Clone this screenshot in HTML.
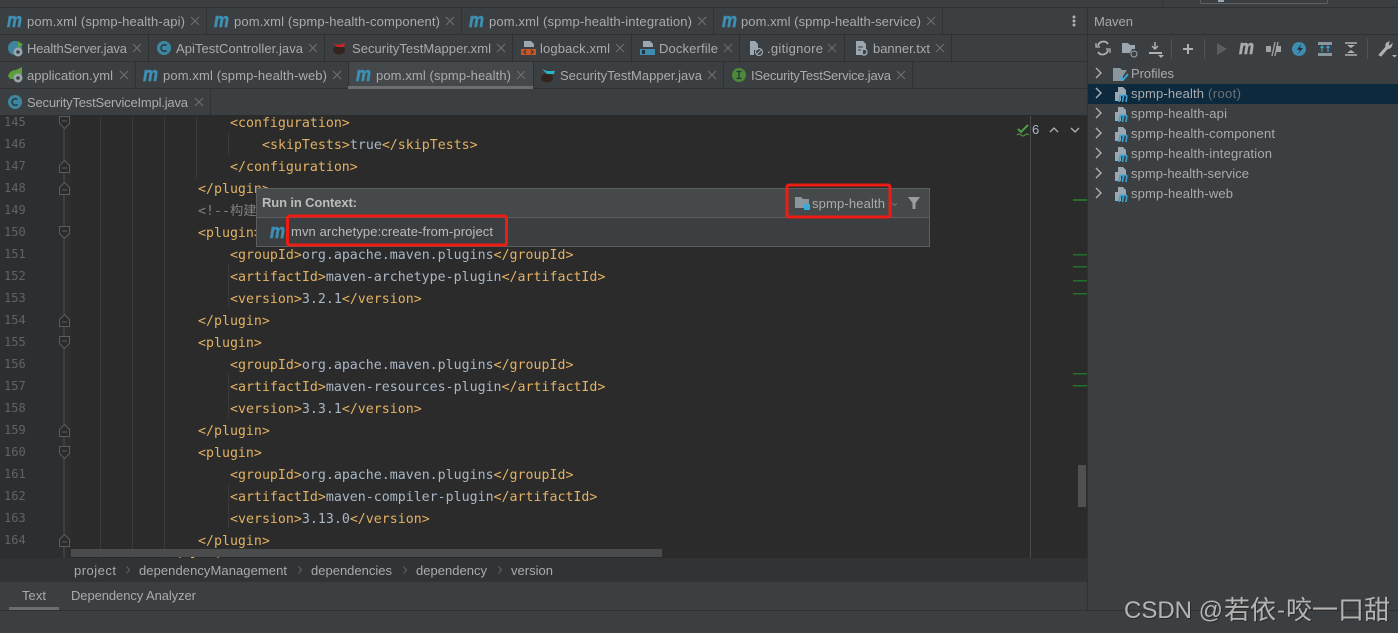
<!DOCTYPE html>
<html><head><meta charset="utf-8"><style>
html,body{margin:0;padding:0;background:#3c3f41;overflow:hidden}
svg{display:block}
.u{font-family:"Liberation Sans","Noto Sans CJK SC",sans-serif;font-size:13px;fill:#a9abad}
.c{font-family:"DejaVu Sans Mono","Noto Sans CJK SC",monospace;font-size:13.28px;fill:#e2b262}
.c tspan{fill:#a9b7c6}
.n{font-family:"DejaVu Sans Mono",monospace;font-size:12px;fill:#606366}
.m{font-family:"Liberation Sans",sans-serif;font-weight:bold;font-style:italic;font-size:20px;fill:#3d8fb3;stroke:#3d8fb3;stroke-width:.6px}
.m2{font-family:"Liberation Sans",sans-serif;font-weight:bold;font-style:italic;font-size:14px;fill:#3aa5d6}
</style></head><body>
<svg xmlns="http://www.w3.org/2000/svg" width="1398" height="633" viewBox="0 0 1398 633">
<defs>
<path id="x" d="M-4-4 4 4M4-4-4 4" stroke="#6f7274" stroke-width="1" fill="none"/>
<path id="mod" d="M3 0h5l3 3v5H6v6H0V5h3z" fill="#9aa7b0"/>
<path id="chev" d="M-3-5 2 0-3 5" stroke="#aeb0b2" stroke-width="1.400" fill="none"/>
<path id="fold1" d="M-5-6H5V1L0 6-5 1zM-2.500-1.500H2.500" stroke="#5a5d5f" fill="#2b2b2b"/>
<path id="fold2" d="M-5 6H5V-1L0-6-5-1zM-2.500 1.500H2.500" stroke="#5a5d5f" fill="#2b2b2b"/>
<path id="brc" d="M-1.500-3.500 1.500 0-1.500 3.500" stroke="#5f6264" fill="none"/>
<clipPath id="edclip"><rect x="0" y="115" width="1087" height="443"/></clipPath>
</defs>

<rect width="1398" height="633" fill="#3c3f41"/>
<!-- top hint -->
<path d="M1163 0V7" stroke="#323232"/>
<path d="M1200.500 0V2.500q0 1 1 1H1326.500q1 0 1-1V0" stroke="#5f6264" fill="none"/>
<rect x="1218" y="0" width="6" height="2" fill="#9aa7b0"/>

<!-- separators -->
<g fill="#2f3133">
<rect x="0" y="7" width="1398" height="1"/>
<rect x="0" y="34" width="1398" height="1"/>
<rect x="0" y="61" width="1087" height="1"/>
<rect x="0" y="88" width="1087" height="1"/>
<rect x="1087" y="7" width="1" height="604"/>
<rect x="206" y="8" width="1" height="26"/><rect x="461" y="8" width="1" height="26"/><rect x="713" y="8" width="1" height="26"/><rect x="942" y="8" width="1" height="26"/>
<rect x="148" y="35" width="1" height="26"/><rect x="324" y="35" width="1" height="26"/><rect x="512" y="35" width="1" height="26"/><rect x="631" y="35" width="1" height="26"/><rect x="739" y="35" width="1" height="26"/><rect x="844" y="35" width="1" height="26"/><rect x="951" y="35" width="1" height="26"/>
<rect x="135" y="62" width="1" height="26"/><rect x="348" y="62" width="1" height="26"/><rect x="533" y="62" width="1" height="26"/><rect x="723" y="62" width="1" height="26"/><rect x="912" y="62" width="1" height="26"/>
<rect x="210" y="89" width="1" height="26"/>
</g>
<!-- active tab -->
<rect x="349" y="62" width="184" height="26" fill="#45484a"/>
<rect x="348" y="86" width="185" height="3" fill="#6c6f72"/>

<!-- row 1 -->
<text class="m" x="7" y="27" textLength="15" lengthAdjust="spacingAndGlyphs">m</text>
<text class="u" x="27" y="26" textLength="158">pom.xml (spmp-health-api)</text><use href="#x" x="195" y="21"/>
<text class="m" x="214" y="27" textLength="15" lengthAdjust="spacingAndGlyphs">m</text>
<text class="u" x="234" y="26" textLength="206">pom.xml (spmp-health-component)</text><use href="#x" x="450" y="21"/>
<text class="m" x="469" y="27" textLength="15" lengthAdjust="spacingAndGlyphs">m</text>
<text class="u" x="489" y="26" textLength="203">pom.xml (spmp-health-integration)</text><use href="#x" x="702" y="21"/>
<text class="m" x="722" y="27" textLength="15" lengthAdjust="spacingAndGlyphs">m</text>
<text class="u" x="741" y="26" textLength="180">pom.xml (spmp-health-service)</text><use href="#x" x="931" y="21"/>
<g fill="#afb1b3"><circle cx="1074" cy="17" r="1.500"/><circle cx="1074" cy="21" r="1.500"/><circle cx="1074" cy="25" r="1.500"/></g>

<!-- row 2 -->
<circle cx="15" cy="48" r="7" fill="#3e86a0"/><path d="M18 41l5 3.500-5 3.500z" fill="#5e9e3d"/><circle cx="18" cy="52" r="4.500" fill="#9aa7b0"/><circle cx="18" cy="52" r="1.800" fill="#3c3f41"/>
<text class="u" x="27" y="53" textLength="100">HealthServer.java</text><use href="#x" x="137" y="48"/>
<circle cx="164" cy="48" r="7" fill="#3e86a0"/><path d="M166.500 45.500a3.300 3.300 0 1 0 0 5" stroke="#25323a" stroke-width="1.400" fill="none"/>
<text class="u" x="176" y="53" textLength="127">ApiTestController.java</text><use href="#x" x="313" y="48"/>
<ellipse cx="339" cy="50" rx="6" ry="4.500" fill="#33241f"/><path d="M333 43l5 2 7-2-1 4-7 0z" fill="#c8242a"/>
<text class="u" x="352" y="53" textLength="139">SecurityTestMapper.xml</text><use href="#x" x="501" y="48"/>
<path d="M524 41h7l3 3v3h-10z" fill="#9aa7b0"/><rect x="521" y="49" width="15" height="6" fill="#c4572a"/><path d="M526 50l-2 2 2 2M531 50l2 2-2 2" stroke="#2b2b2b" fill="none"/>
<text class="u" x="540" y="53" textLength="70">logback.xml</text><use href="#x" x="620" y="48"/>
<path d="M643 41h7l3 3v3h-10z" fill="#9aa7b0"/><rect x="640" y="49" width="15" height="6" fill="#3e8db0"/><rect x="642" y="50" width="3" height="4" fill="#25323a"/>
<text class="u" x="659" y="53" textLength="59">Dockerfile</text><use href="#x" x="728" y="48"/>
<path d="M750 41h5l3 3v6h-4v5h-4z" fill="#9aa7b0"/><circle cx="759" cy="52" r="3.500" stroke="#9aa7b0" stroke-width="1.200" fill="none"/><path d="M757 54l4-4" stroke="#9aa7b0"/>
<text class="u" x="767" y="53" textLength="56">.gitignore</text><use href="#x" x="832" y="48"/>
<path d="M856 41h7l3 3v6h-3v5h-7z" fill="#9aa7b0"/><path d="M858 47h5M858 50h4" stroke="#3c3f41"/><circle cx="864" cy="52" r="3" stroke="#9aa7b0" stroke-width="1.400" fill="none"/>
<text class="u" x="873" y="53" textLength="57">banner.txt</text><use href="#x" x="940" y="48"/>

<!-- row 3 -->
<path d="M8 76q2-6 8-6l6-3v7q-1 5-6 5H10z" fill="#5e9e3d"/><circle cx="18" cy="78" r="4.500" fill="#9aa7b0"/><circle cx="18" cy="78" r="1.800" fill="#3c3f41"/>
<text class="u" x="27" y="80" textLength="86">application.yml</text><use href="#x" x="124" y="75"/>
<text class="m" x="143" y="81" textLength="15" lengthAdjust="spacingAndGlyphs">m</text>
<text class="u" x="163" y="80" textLength="164">pom.xml (spmp-health-web)</text><use href="#x" x="337" y="75"/>
<text class="m" x="356" y="81" textLength="15" lengthAdjust="spacingAndGlyphs">m</text>
<text class="u" x="376" y="80" textLength="135">pom.xml (spmp-health)</text><use href="#x" x="521" y="75"/>
<ellipse cx="547" cy="78" rx="6" ry="4.500" fill="#33241f"/><path d="M542 69l5 2 8 0-1 3-7 0z" fill="#29b5c9"/>
<text class="u" x="560" y="80" textLength="142">SecurityTestMapper.java</text><use href="#x" x="712" y="75"/>
<circle cx="739" cy="75" r="7" fill="#4c8a3a"/><path d="M736.500 71.500h5M736.500 78.500h5M739 71.500v7" stroke="#25323a" stroke-width="1.200"/>
<text class="u" x="751" y="80" textLength="140">ISecurityTestService.java</text><use href="#x" x="901" y="75"/>

<!-- row 4 -->
<circle cx="15" cy="102" r="7" fill="#3e86a0"/><path d="M17.500 99.500a3.300 3.300 0 1 0 0 5" stroke="#25323a" stroke-width="1.400" fill="none"/>
<text class="u" x="27" y="107" textLength="161">SecurityTestServiceImpl.java</text><use href="#x" x="199" y="102"/>

<!-- editor -->
<rect x="0" y="115" width="1087" height="443" fill="#2b2b2b"/>
<rect x="0" y="115" width="71" height="443" fill="#2d2e2f"/>
<g fill="#393a3b">
<rect x="100" y="116" width="1" height="442"/><rect x="132" y="116" width="1" height="442"/><rect x="164" y="116" width="1" height="442"/>
<rect x="196" y="116" width="1" height="62"/><rect x="228" y="132" width="1" height="24"/>
<rect x="228" y="264" width="1" height="44"/><rect x="228" y="374" width="1" height="44"/><rect x="228" y="484" width="1" height="44"/>
</g>
<rect x="1030" y="116" width="1" height="442" fill="#4a4b4c"/>
<path d="M64 128V558" stroke="#4c4f51"/>

<text class="n" x="4" y="126">145</text><text class="n" x="4" y="148">146</text><text class="n" x="4" y="170">147</text><text class="n" x="4" y="192">148</text><text class="n" x="4" y="214">149</text><text class="n" x="4" y="236">150</text><text class="n" x="4" y="258">151</text><text class="n" x="4" y="280">152</text><text class="n" x="4" y="302">153</text><text class="n" x="4" y="324">154</text><text class="n" x="4" y="346">155</text><text class="n" x="4" y="368">156</text><text class="n" x="4" y="390">157</text><text class="n" x="4" y="412">158</text><text class="n" x="4" y="434">159</text><text class="n" x="4" y="456">160</text><text class="n" x="4" y="478">161</text><text class="n" x="4" y="500">162</text><text class="n" x="4" y="522">163</text><text class="n" x="4" y="544">164</text>
<use href="#fold1" x="64.500" y="122.500"/><use href="#fold2" x="64.500" y="166.500"/><use href="#fold2" x="64.500" y="188.500"/><use href="#fold1" x="64.500" y="232.500"/><use href="#fold2" x="64.500" y="320.500"/><use href="#fold1" x="64.500" y="342.500"/><use href="#fold2" x="64.500" y="430.500"/><use href="#fold1" x="64.500" y="452.500"/><use href="#fold2" x="64.500" y="540.500"/>

<text class="c" x="230" y="127">&lt;configuration&gt;</text>
<text class="c" x="262" y="149">&lt;skipTests&gt;<tspan>true</tspan>&lt;/skipTests&gt;</text>
<text class="c" x="230" y="171">&lt;/configuration&gt;</text>
<text class="c" x="198" y="193">&lt;/plugin&gt;</text>
<text class="c" x="198" y="215" style="fill:#808080">&lt;!--构建</text>
<text class="c" x="198" y="237">&lt;plugin&gt;</text>
<text class="c" x="230" y="259">&lt;groupId&gt;<tspan>org.apache.maven.plugins</tspan>&lt;/groupId&gt;</text>
<text class="c" x="230" y="281">&lt;artifactId&gt;<tspan>maven-archetype-plugin</tspan>&lt;/artifactId&gt;</text>
<text class="c" x="230" y="303">&lt;version&gt;<tspan>3.2.1</tspan>&lt;/version&gt;</text>
<text class="c" x="198" y="325">&lt;/plugin&gt;</text>
<text class="c" x="198" y="347">&lt;plugin&gt;</text>
<text class="c" x="230" y="369">&lt;groupId&gt;<tspan>org.apache.maven.plugins</tspan>&lt;/groupId&gt;</text>
<text class="c" x="230" y="391">&lt;artifactId&gt;<tspan>maven-resources-plugin</tspan>&lt;/artifactId&gt;</text>
<text class="c" x="230" y="413">&lt;version&gt;<tspan>3.3.1</tspan>&lt;/version&gt;</text>
<text class="c" x="198" y="435">&lt;/plugin&gt;</text>
<text class="c" x="198" y="457">&lt;plugin&gt;</text>
<text class="c" x="230" y="479">&lt;groupId&gt;<tspan>org.apache.maven.plugins</tspan>&lt;/groupId&gt;</text>
<text class="c" x="230" y="501">&lt;artifactId&gt;<tspan>maven-compiler-plugin</tspan>&lt;/artifactId&gt;</text>
<text class="c" x="230" y="523">&lt;version&gt;<tspan>3.13.0</tspan>&lt;/version&gt;</text>
<text class="c" x="198" y="545">&lt;/plugin&gt;</text>
<text class="c" x="166" y="567" clip-path="url(#edclip)">&lt;/plugins&gt;</text>

<!-- inspection -->
<path d="M1018 129l3 3 7-7" stroke="#4f9e4a" stroke-width="2" fill="none"/><path d="M1017 135q2-2 4 0t4 0 4 0" stroke="#4f9e4a" fill="none"/>
<text class="u" x="1032" y="134" style="fill:#a9b7c6">6</text>
<path d="M1050 132l4-4 4 4M1071 128l4 4 4-4" stroke="#aeb0b2" stroke-width="1.300" fill="none"/>
<!-- change markers -->
<g fill="#23702a"><rect x="1073" y="199" width="14" height="2"/><rect x="1073" y="254" width="14" height="1.500"/><rect x="1073" y="266" width="14" height="1.500"/><rect x="1073" y="280" width="14" height="1.500"/><rect x="1073" y="293" width="14" height="1.500"/><rect x="1073" y="373" width="14" height="1.500"/><rect x="1073" y="385" width="14" height="1.500"/></g>
<!-- scrollbars -->
<rect x="1078" y="465" width="8" height="42" fill="#4f5052"/>
<rect x="71" y="549" width="591" height="8" fill="#4a4b4c"/>

<!-- breadcrumb -->
<rect x="0" y="558" width="1087" height="24" fill="#313335"/>
<rect x="0" y="558" width="1087" height="1" fill="#323232"/>
<text class="u" x="74" y="575" textLength="42">project</text><use href="#brc" x="128" y="570"/>
<text class="u" x="139" y="575" textLength="148">dependencyManagement</text><use href="#brc" x="300" y="570"/>
<text class="u" x="311" y="575" textLength="81">dependencies</text><use href="#brc" x="405" y="570"/>
<text class="u" x="416" y="575" textLength="71">dependency</text><use href="#brc" x="500" y="570"/>
<text class="u" x="511" y="575" textLength="42">version</text>
<!-- bottom tabs -->
<rect x="0" y="582" width="1087" height="28" fill="#3c3f41"/>
<text class="u" x="22" y="600" textLength="24">Text</text>
<text class="u" x="71" y="600" textLength="125">Dependency Analyzer</text>
<rect x="9" y="607" width="50" height="3" fill="#6c6f72"/>
<rect x="0" y="610" width="1398" height="1" fill="#2f3133"/>

<!-- popup -->
<rect x="256.500" y="188.500" width="673" height="58" fill="#3c3f41" stroke="#5d5e5f"/>
<rect x="257" y="189" width="672" height="28" fill="#46494a"/>
<rect x="257" y="217" width="672" height="1" fill="#5d5e5f"/>
<text class="u" x="262" y="207" textLength="95" style="font-weight:bold;fill:#bbbbbb">Run in Context:</text>
<text class="m" x="270" y="238" textLength="15" lengthAdjust="spacingAndGlyphs">m</text>
<text class="u" x="291" y="236" textLength="202" style="fill:#bbbbbb">mvn archetype:create-from-project</text>
<path d="M795 197h6l2 2h6v9h-14z" fill="#8a969e"/><rect x="804" y="204" width="6" height="6" fill="#38a9dc"/>
<text class="u" x="812" y="208" textLength="73">spmp-health</text>
<path d="M892 203l2.500 2.500 2.500-2.500" stroke="#6f7274" fill="none"/>
<path d="M908 197h12l-4.500 6v6h-3v-6z" fill="#9a9c9e"/>
<rect x="287.500" y="216" width="219" height="29" rx="2" fill="none" stroke="#ee1c12" stroke-width="3"/>
<rect x="787" y="185" width="103" height="32" rx="2" fill="none" stroke="#ee1c12" stroke-width="3"/>

<!-- maven panel -->
<text class="u" x="1094" y="26" textLength="39" style="fill:#a7a9ab">Maven</text>
<!-- toolbar -->
<path d="M1108 44a5.500 5.500 0 0 0-10 2M1098 52a5.500 5.500 0 0 0 10-2" stroke="#afb1b3" stroke-width="1.800" fill="none"/><path d="M1096 43v4h4M1110 53v-4h-4" stroke="#afb1b3" stroke-width="1.300" fill="none"/>
<path d="M1122 43h6l2 2h5v4h-3l-2 4h-8z" fill="#9aa7b0"/><circle cx="1134" cy="54" r="3" stroke="#9aa7b0" fill="none"/>
<path d="M1155 42v7M1152 46l3 3 3-3" stroke="#afb1b3" stroke-width="1.500" fill="none"/><rect x="1149" y="52" width="13" height="2" fill="#afb1b3"/><path d="M1158 55h6l-3 3z" fill="#afb1b3"/>
<rect x="1171" y="39" width="1" height="20" fill="#515456"/>
<path d="M1183 49h10M1188 44v10" stroke="#afb1b3" stroke-width="2" fill="none"/>
<rect x="1204" y="39" width="1" height="20" fill="#515456"/>
<path d="M1217 43l10 6-10 6z" fill="#5c5f61"/>
<text class="m" x="1239" y="54" textLength="15" lengthAdjust="spacingAndGlyphs" style="fill:#a9abad;stroke:#a9abad">m</text>
<path d="M1266 46h5v6h-5zM1276 46h5v6h-5z" fill="#a0a2a4"/><path d="M1272 56l3-14M1275 56l3-14" stroke="#a0a2a4" stroke-width="1.300" fill="none"/>
<circle cx="1299" cy="49" r="7" fill="#3e8db0"/><path d="M1301 44l-4 6h3l-2 4 5-6h-3z" fill="#25323a"/>
<rect x="1318" y="42" width="14" height="3" fill="#8a969e"/><rect x="1318" y="53" width="14" height="3" fill="#8a969e"/><path d="M1322 52v-6M1328 52v-6M1320.500 48l1.500-2 1.500 2M1326.500 48l1.500-2 1.500 2" stroke="#38a9dc" fill="none"/>
<path d="M1345 43h12M1345 55h12" stroke="#afb1b3" stroke-width="1.500"/><path d="M1347 45l4 3 4-3zM1347 53l4-3 4 3z" fill="#afb1b3"/>
<rect x="1367" y="39" width="1" height="20" fill="#515456"/>
<path d="M1379 55l7-8q-1-4 3-5l-1 3 2 1 2-2q0 4-5 5l-6 7z" fill="#afb1b3" stroke="#afb1b3"/><path d="M1392 55h5l-2.500 2.500z" fill="#afb1b3"/>

<!-- tree -->
<rect x="1088" y="84" width="310" height="20" fill="#0d293e"/>
<use href="#chev" x="1099" y="73"/><use href="#chev" x="1099" y="93"/><use href="#chev" x="1099" y="113"/><use href="#chev" x="1099" y="133"/><use href="#chev" x="1099" y="153"/><use href="#chev" x="1099" y="173"/><use href="#chev" x="1099" y="193"/>
<path d="M1113 68h7l2 2h5l-4 6v5h-10z" fill="#8a969e"/><path d="M1120 77l3 3 5-6" stroke="#38a9dc" stroke-width="1.800" fill="none"/>
<text class="u" x="1131" y="78" textLength="43">Profiles</text>
<use href="#mod" x="1115" y="87"/><text class="m2" x="1118" y="102" textLength="10" lengthAdjust="spacingAndGlyphs">m</text>
<text class="u" x="1131" y="98" textLength="73">spmp-health</text><text class="u" x="1208" y="98" textLength="33" style="fill:#6f7274">(root)</text>
<use href="#mod" x="1115" y="107"/><text class="m2" x="1118" y="122" textLength="10" lengthAdjust="spacingAndGlyphs">m</text>
<text class="u" x="1131" y="118" textLength="96">spmp-health-api</text>
<use href="#mod" x="1115" y="127"/><text class="m2" x="1118" y="142" textLength="10" lengthAdjust="spacingAndGlyphs">m</text>
<text class="u" x="1131" y="138" textLength="144">spmp-health-component</text>
<use href="#mod" x="1115" y="147"/><text class="m2" x="1118" y="162" textLength="10" lengthAdjust="spacingAndGlyphs">m</text>
<text class="u" x="1131" y="158" textLength="141">spmp-health-integration</text>
<use href="#mod" x="1115" y="167"/><text class="m2" x="1118" y="182" textLength="10" lengthAdjust="spacingAndGlyphs">m</text>
<text class="u" x="1131" y="178" textLength="118">spmp-health-service</text>
<use href="#mod" x="1115" y="187"/><text class="m2" x="1118" y="202" textLength="10" lengthAdjust="spacingAndGlyphs">m</text>
<text class="u" x="1131" y="198" textLength="102">spmp-health-web</text>

<!-- watermark -->
<g font-family="'Liberation Sans','Noto Sans CJK SC',sans-serif" fill="#2a2a2a" transform="translate(1 1)">
<text x="1124" y="618" font-size="24">CSDN @</text><text x="1224" y="619" font-size="26">若依</text><text x="1277" y="618" font-size="24">-</text><text x="1286" y="619" font-size="26">咬一口甜</text>
</g>
<g font-family="'Liberation Sans','Noto Sans CJK SC',sans-serif" fill="#b4b4b4">
<text x="1124" y="618" font-size="24">CSDN @</text><text x="1224" y="619" font-size="26">若依</text><text x="1277" y="618" font-size="24">-</text><text x="1286" y="619" font-size="26">咬一口甜</text>
</g>
</svg>
</body></html>
